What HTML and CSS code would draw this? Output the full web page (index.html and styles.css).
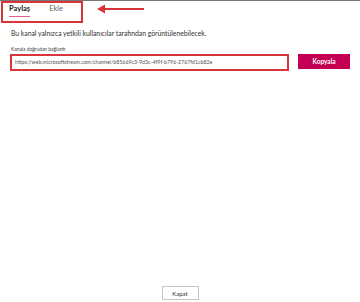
FILE: index.html
```html
<!DOCTYPE html>
<html lang="tr">
<head>
  <meta charset="UTF-8" />
  <title>Kanalı paylaş</title>
  <link rel="stylesheet" href="styles.css">
</head>
<body>
  <div class="dialog">
    <div class="top">
      <div class="tabs">
        <span class="tab active">Paylaş</span>
        <span class="tab">Ekle</span>
      </div>
      <svg class="arrow" width="50" height="12" viewBox="0 0 50 12">
        <path d="M48 6 H6" stroke="#d9343b" stroke-width="2" fill="none" />
        <path d="M1 6 L9 1.5 L9 10.5 Z" fill="#d9343b" />
      </svg>
    </div>

    <div class="content">
      <p class="note">Bu kanal yalnızca yetkili kullanıcılar tarafından görüntülenebilecek.</p>
      <div class="field-label">Kanala doğrudan bağlantı</div>
      <div class="link-row">
        <div class="link-box">https://web.microsoftstream.com/channel/b85669c3-9d3c-4f9f-b796-2767fd1cb82e</div>
        <button class="copy">Kopyala</button>
      </div>
    </div>

    <div class="footer">
      <button class="close">Kapat</button>
    </div>
  </div>
</body>
</html>
```

FILE: styles.css
```css
body {
  margin: 0;
  font-family: Lato, "Open Sans", sans-serif;
  background-color: #fff;
  color: #333;
}

.dialog {
  height: 302px;
  box-sizing: border-box;
  border-top: 1px solid #777;
  display: flex;
  flex-direction: column;
}

.top {
  display: flex;
  align-items: center;
  padding-left: 1px;
}

.tabs {
  display: flex;
  gap: 19px;
  width: 82px;
  height: 22px;
  box-sizing: border-box;
  border: 2px solid #d9343b;
  padding-left: 6px;
}

.tab {
  font-size: 7.5px;
  line-height: 12px;
  color: #666;
  height: 14px;
  box-sizing: border-box;
}

.tab.active {
  font-weight: 700;
  color: #222;
  border-bottom: 1.5px solid #e0608a;
}

.arrow {
  margin-left: 13px;
  margin-top: -7px;
}

.content {
  flex-grow: 1;
  padding: 0 10px;
}

.note {
  margin: 6px 0 0 1px;
  font-size: 6.8px;
  line-height: 8px;
  color: #333;
}

.field-label {
  margin: 9px 0 1px 1px;
  font-size: 4.9px;
  line-height: 7px;
  color: #444;
}

.link-row {
  display: flex;
  align-items: flex-start;
}

.link-box {
  width: 279px;
  height: 17px;
  box-sizing: border-box;
  border: 2px solid #d9343b;
  padding-left: 3px;
  font-size: 5.25px;
  line-height: 13px;
  color: #555;
  white-space: nowrap;
  overflow: hidden;
}

.copy {
  margin-left: 9px;
  width: 52px;
  height: 15px;
  padding: 0;
  border: none;
  background-color: #c30052;
  color: #fff;
  font-family: inherit;
  font-size: 6.5px;
  font-weight: 700;
}

.footer {
  display: flex;
  justify-content: center;
  padding-bottom: 2px;
}

.close {
  width: 37px;
  height: 14px;
  padding: 0;
  border: 1px solid #c8c6c4;
  background-color: #fff;
  color: #333;
  font-family: inherit;
  font-size: 6px;
}
```
